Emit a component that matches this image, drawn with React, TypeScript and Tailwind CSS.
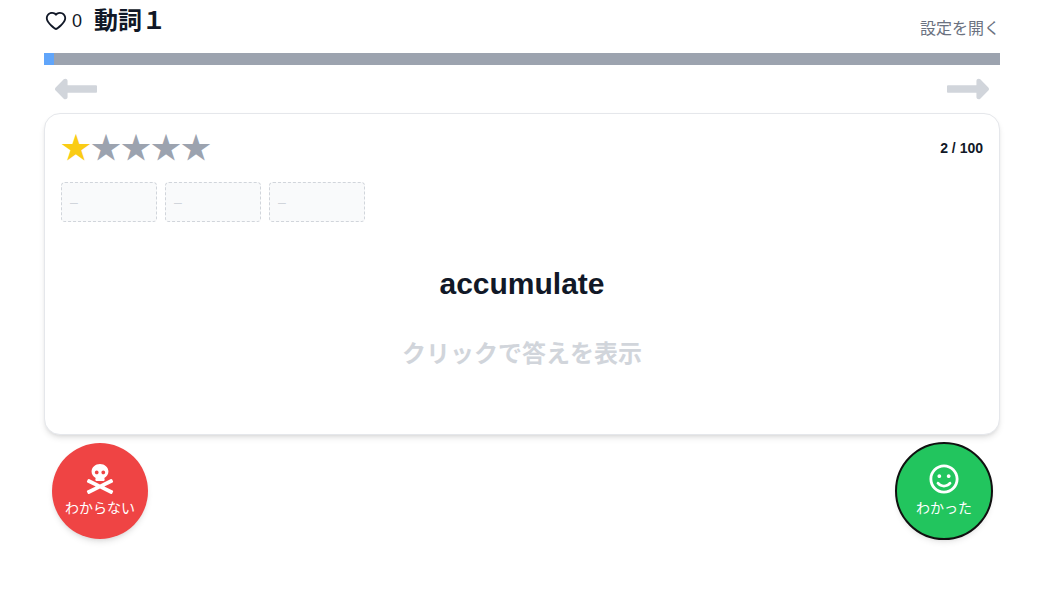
import React from 'react';
import { AiOutlineHeart } from 'react-icons/ai';
import {
  FaLongArrowAltLeft,
  FaLongArrowAltRight,
  FaRegSmile,
  FaSkullCrossbones,
} from 'react-icons/fa';

interface Card {
  word: string;
  level: number;
  position: number;
  total: number;
}

const MAX_LEVEL = 5;

const card: Card = {
  word: 'accumulate',
  level: 1,
  position: 2,
  total: 100,
};

const history: string[] = ['–', '–', '–'];

function Header() {
  return (
    <header className="flex items-start justify-between pt-px">
      <div className="flex h-10 items-center">
        <button type="button" aria-label="いいね" className="flex items-center gap-1 text-lg">
          <AiOutlineHeart className="h-6 w-6" />
          <span>0</span>
        </button>
        <h1 className="ml-3 text-2xl font-bold">動詞１</h1>
      </div>
      <button type="button" className="mt-4 text-base text-[#6b7280]">
        設定を開く
      </button>
    </header>
  );
}

function Stars({ level }: { level: number }) {
  return (
    <div className="flex text-3xl" aria-label={`レベル ${level}`}>
      {Array.from({ length: MAX_LEVEL }, (_, i) => (
        <span key={i} className={i < level ? 'text-[#facc15]' : 'text-[#9ca3af]'}>
          ★
        </span>
      ))}
    </div>
  );
}

export default function App() {
  const progress = ((card.position - 1) / card.total) * 100;

  return (
    <div className="bg-white pr-[37px] pb-8 pl-11 font-['Liberation_Sans','Noto_Sans_CJK_JP',sans-serif] text-[#111827]">
      <Header />

      {/* 進捗バー */}
      <div className="mt-3 h-3 bg-[#9ca3af]">
        <div className="h-3 bg-[#60a5fa]" style={{ width: `${progress}%` }} />
      </div>

      {/* 前後の移動 */}
      <nav className="flex justify-between px-2 text-[#d1d5db]">
        <button type="button" aria-label="前へ">
          <FaLongArrowAltLeft className="h-12 w-12" />
        </button>
        <button type="button" aria-label="次へ">
          <FaLongArrowAltRight className="h-12 w-12" />
        </button>
      </nav>

      {/* 単語カード */}
      <main className="rounded-2xl border border-[#e5e7eb] bg-white px-4 pt-4 pb-16 shadow-md">
        <div className="flex items-center justify-between">
          <Stars level={card.level} />
          <p className="text-sm font-bold">
            {card.position} / {card.total}
          </p>
        </div>

        <ul className="mt-4 flex gap-2">
          {history.map((item, i) => (
            <li
              key={i}
              className="flex h-10 w-24 items-center rounded border border-dashed border-[#d1d5db] bg-[#f9fafb] px-2 text-sm text-[#d1d5db]"
            >
              {item}
            </li>
          ))}
        </ul>

        <div className="mt-11 text-center font-bold">
          <h2 className="text-3xl">{card.word}</h2>
          <p className="mt-9 text-2xl text-[#d1d5db]">クリックで答えを表示</p>
        </div>
      </main>

      {/* 回答ボタン */}
      <div className="mt-2 flex justify-between px-2 text-sm text-white">
        <button
          type="button"
          className="flex h-24 w-24 flex-col items-center justify-center gap-1 rounded-full bg-[#ef4444] shadow-md"
        >
          <FaSkullCrossbones className="text-3xl" />
          わからない
        </button>
        <button
          type="button"
          className="flex h-24 w-24 flex-col items-center justify-center gap-1 rounded-full bg-[#22c55e] shadow-md outline-2 -outline-offset-1 outline-[#101010]"
        >
          <FaRegSmile className="text-3xl" />
          わかった
        </button>
      </div>
    </div>
  );
}
